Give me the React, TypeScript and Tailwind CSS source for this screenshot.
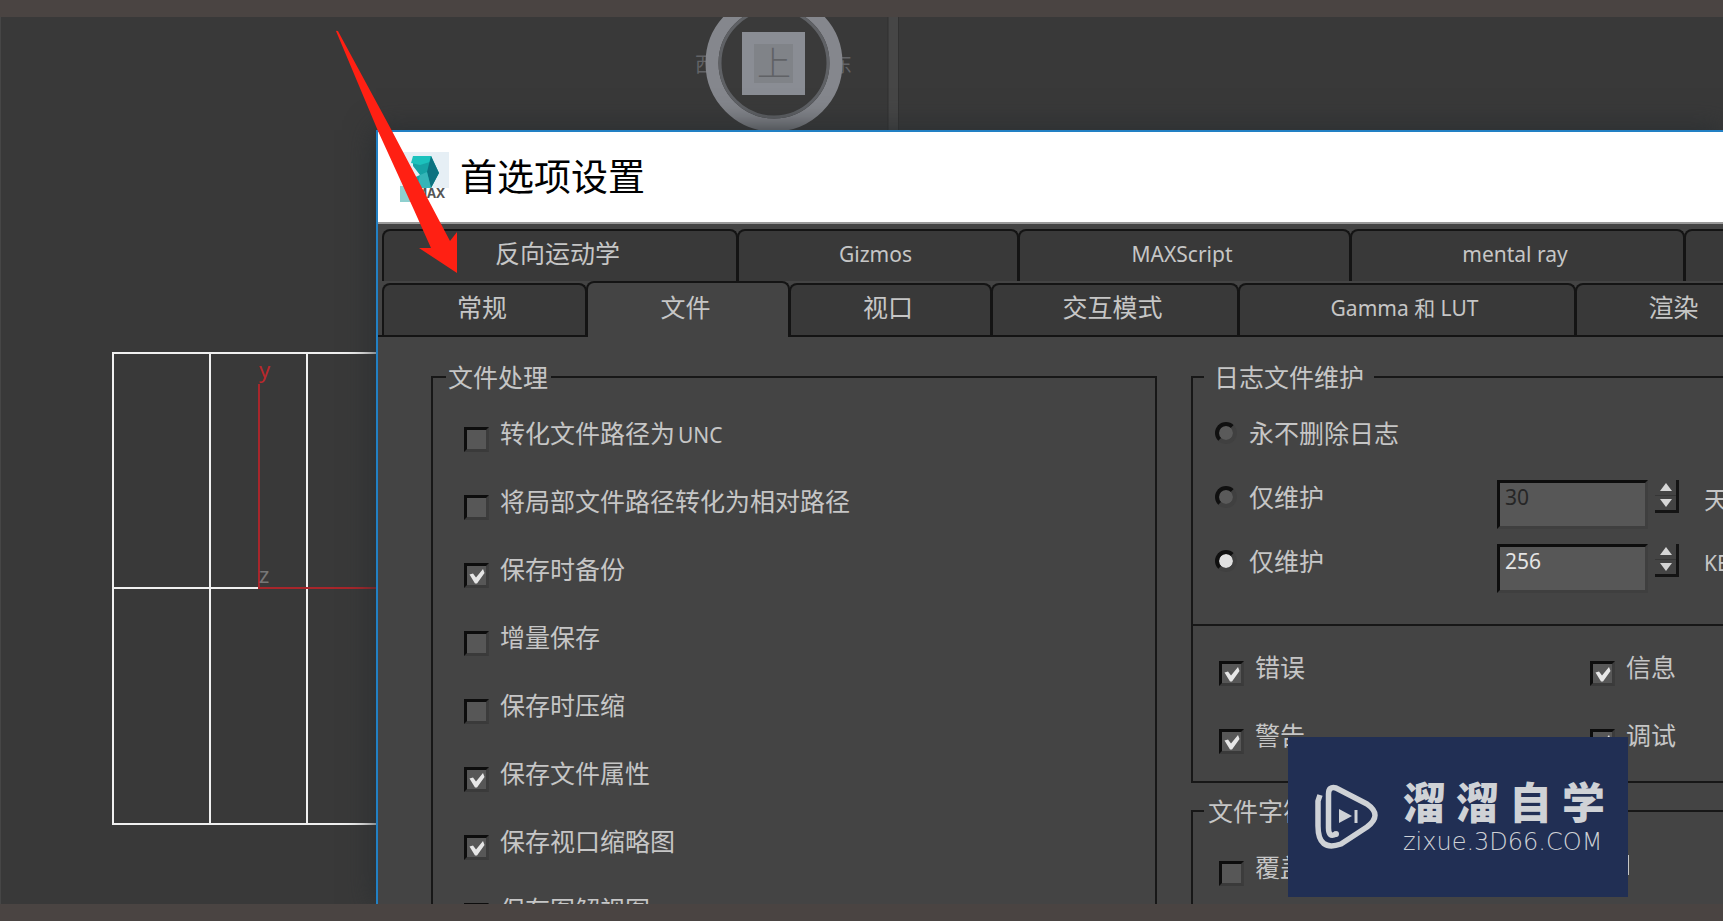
import React from "react";
import clsx from "clsx";

const FILE_OPTIONS = [
  { label: "转化文件路径为", suffix: "UNC", checked: false },
  { label: "将局部文件路径转化为相对路径", checked: false },
  { label: "保存时备份", checked: true },
  { label: "增量保存", checked: false },
  { label: "保存时压缩", checked: false },
  { label: "保存文件属性", checked: true },
  { label: "保存视口缩略图", checked: true },
  { label: "保存图解视图", checked: true },
];

const LOG_OPTIONS = [
  { label: "错误", checked: true },
  { label: "信息", checked: true },
  { label: "警告", checked: true },
  { label: "调试", checked: true },
];

const LOG_RULES = [
  { label: "永不删除日志" },
  { label: "仅维护", value: "30", unit: "天", disabled: true },
  { label: "仅维护", value: "256", unit: "KB", active: true },
];

const TABS_BACK = [
  { label: "反向运动学", width: "w-[356px]", cjk: true },
  { label: "Gizmos", width: "w-[282px]" },
  { label: "MAXScript", width: "w-[333px]" },
  { label: "mental ray", width: "w-[335px]" },
  { label: "", width: "w-[240px]" },
];

const TABS_FRONT = [
  { label: "常规", width: "w-[205px]", cjk: true },
  { label: "文件", width: "w-[204px]", cjk: true, selected: true },
  { label: "视口", width: "w-[203px]", cjk: true },
  { label: "交互模式", width: "w-[248px]", cjk: true },
  { label: "Gamma 和 LUT", width: "w-[338px]" },
  { label: "渲染", width: "w-[202px]", cjk: true },
];

type TabProps = { label: string; width: string; cjk?: boolean; selected?: boolean };

const Tab = ({ label, width, cjk, selected }: TabProps) => (
  <button
    type="button"
    role="tab"
    aria-selected={!!selected}
    className={clsx(
      "-mr-px shrink-0 rounded-t-lg border-2 border-b-0 border-[#141414] pr-[5px] text-[#c6c6c6]",
      width,
      cjk ? "pb-[4px] text-[25px]" : "pb-[2px] text-[21px]",
      selected ? "relative -mb-[2px] h-[56px] bg-[#444444]" : "h-[52px] bg-[#393939]"
    )}
  >
    {label}
  </button>
);

type CheckProps = { label: string; suffix?: string; checked?: boolean };

const Check = ({ label, suffix, checked }: CheckProps) => (
  <label className="flex h-[31px] items-start gap-[11px] whitespace-nowrap">
    <span className="mt-[6px] grid shrink-0">
      <input
        type="checkbox"
        defaultChecked={checked}
        className="peer col-start-1 row-start-1 size-[25px] appearance-none border-[3px] border-t-[#0d0d0d] border-r-[#3c3c3c] border-b-[#3a3a3a] border-l-[#0d0d0d] bg-[#575757]"
      />
      <svg viewBox="0 0 25 25" className="pointer-events-none invisible col-start-1 row-start-1 size-[25px] peer-checked:visible">
        <path d="M5.500 11.500 L9 10.500 L12 14.500 L19 6 L20.500 10 L13 20.500 L11 20.500 Z" fill="#e6e6e6" />
      </svg>
    </span>
    <span className="text-[25px] leading-[25px]">
      {label}
      {suffix && <span className="ml-[3px] text-[21px]">{suffix}</span>}
    </span>
  </label>
);

const Spinner = () => (
  <span className="ml-[7px] flex h-[33px] w-6 shrink-0 flex-col border-r-[3px] border-b-[3px] border-[#141414]">
    <button type="button" aria-label="增加" className="flex flex-1 items-center justify-center">
      <svg viewBox="0 0 12 8" className="h-2 w-3"><path d="M6 0 L12 8 H0 Z" fill="#d6d6d6" /></svg>
    </button>
    <button type="button" aria-label="减少" className="flex flex-1 items-center justify-center border-t border-[#363636]">
      <svg viewBox="0 0 12 8" className="h-2 w-3"><path d="M0 0 H12 L6 8 Z" fill="#d6d6d6" /></svg>
    </button>
  </span>
);

const LogRule = ({ label, value, unit, disabled, active }: (typeof LOG_RULES)[number]) => (
  <div className="flex h-[49px] items-start whitespace-nowrap">
    <label className="flex w-[282px] shrink-0 items-center gap-3 text-[25px] leading-[34px]">
      <input
        type="radio"
        name="log-rule"
        defaultChecked={active}
        className="size-[22px] shrink-0 appearance-none rounded-full border-[4px] border-t-[#101010] border-r-[#404040] border-b-[#404040] border-l-[#101010] bg-[#5a5a5a] bg-clip-padding checked:bg-[#e0e0e0]"
      />
      {label}
    </label>
    {value && (
      <>
        <input
          type="text"
          aria-label={label + unit}
          defaultValue={value}
          className={clsx(
            "h-[49px] w-[151px] shrink-0 border-[3px] border-t-[#0d0d0d] border-r-[#3f3f3f] border-b-[#3f3f3f] border-l-[#0d0d0d] bg-[#575757] pb-[15px] pl-[5px] text-[21px]",
            disabled ? "text-[#262626]" : "text-[#e4e4e4]"
          )}
        />
        <Spinner />
        <span className={clsx("ml-[25px] shrink-0 leading-[38px]", disabled ? "text-[25px]" : "text-[21px]")}>{unit}</span>
      </>
    )}
  </div>
);

const Viewport = () => (
  <svg className="absolute inset-0 h-full w-full" aria-hidden="true">
    {/* viewport divider */}
    <rect x="888" y="0" width="10" height="887" fill="#464646" />
    <path d="M888 0 V887 M898.500 0 V887" stroke="#313131" />
    <path d="M0.500 0 V887" stroke="#464646" />

    {/* view cube */}
    <g fontFamily="Noto Sans CJK SC" fill="#626366">
      <text x="695" y="55" fontSize="20">西</text>
      <text x="832" y="55" fontSize="20">东</text>
    </g>
    <circle cx="774" cy="46" r="62" fill="#3a3a3a" stroke="#85878d" strokeWidth="13" />
    <circle cx="774" cy="46" r="54" fill="none" stroke="#5f6165" strokeWidth="3" />
    <rect x="742" y="15" width="63" height="63" fill="#8a8d94" />
    <rect x="754" y="27" width="39" height="39" fill="#808388" />
    <text x="757" y="59" fontSize="34" fontFamily="Noto Sans CJK SC" fontWeight="300" fill="#606266">上</text>

    {/* wireframe */}
    <g stroke="#f0f0f0" strokeWidth="2" fill="none">
      <path d="M113 336 H400 M113 571 H259 M113 807 H400" />
      <path d="M113 335 V808 M210 336 V807 M307 336 V807" />
    </g>
    <path d="M259 367 V571 H400" stroke="#a8262b" strokeWidth="2" fill="none" />
    <g fontFamily="Noto Sans" fontSize="22">
      <text x="259" y="361" fill="#b8282c">y</text>
      <text x="259" y="566" fill="#777777">z</text>
    </g>
  </svg>
);

const AppIcon = () => (
  <svg viewBox="0 0 49 50" className="h-[50px] w-[49px]" aria-hidden="true">
    <rect width="49" height="36" fill="#e6eff5" />
    <rect y="34" width="16" height="16" fill="#8fd0cf" />
    <path d="M13 4 L31 4 L39 21 L31 36 L17 36 L11 27 L20 23 L13 14 Z" fill="#16a3a5" />
    <path d="M13 4 L31 4 L33 9 L20 13 L11 11 Z" fill="#1cc2bd" />
    <path d="M31 4 L39 21 L31 36 L27 20 Z" fill="#0c7280" />
    <path d="M20 23 L27 20 L31 36 L17 36 Z" fill="#35b5b8" />
    <text x="18" y="46" fontFamily="Liberation Mono" fontSize="15" fontWeight="700" fill="#555555">MAX</text>
  </svg>
);

const Watermark = () => (
  <div className="absolute right-[95px] bottom-[7px] flex h-[160px] w-[340px] items-center bg-[#212f54] pl-[26px] text-[#cfd2d6]">
    <svg viewBox="0 0 66 66" className="size-[66px] shrink-0" aria-hidden="true">
      <path d="M22 50 Q14.500 54 14.500 44 V10 Q14.500 2 22 4 L53 20 Q69 31 53 43 L27 60 Q4 68 4 42 V17 L6 11" fill="none" stroke="currentColor" strokeWidth="5.500" strokeLinejoin="round" />
      <circle cx="22" cy="50" r="3" fill="currentColor" />
      <path d="M25 25 L38 32 L25 39 Z" fill="currentColor" />
      <path d="M42 26 V39" stroke="currentColor" strokeWidth="3" />
    </svg>
    <div className="ml-[23px] w-[202px] pt-1">
      <div className="flex justify-between text-[43px] leading-[46px] font-black">
        <span>溜</span>
        <span>溜</span>
        <span>自</span>
        <span>学</span>
      </div>
      <div className="font-['DejaVu_Sans'] text-[24px] leading-[32px] font-extralight whitespace-nowrap">zixue.3D66.COM</div>
    </div>
  </div>
);

export default function App() {
  return (
    <div className="flex h-screen flex-col overflow-hidden bg-[#4a4442] font-['Noto_Sans','Noto_Sans_CJK_SC',sans-serif] text-[#c6c6c6]">
      <div className="h-[17px] shrink-0" />

      <main className="relative flex min-h-0 flex-1 overflow-hidden bg-[#393939] pt-[113px] pl-[376px]">
        <Viewport />

        <section className="relative flex min-w-0 flex-1 flex-col border-t-2 border-l-2 border-[#2280c4] bg-[#444444] shadow-[0_0_28px_#282d30]">
          <header className="flex h-[92px] shrink-0 items-center gap-[11px] border-b-2 border-[#9a9a9a] bg-white pl-[22px]">
            <AppIcon />
            <h1 className="text-[37px] leading-[40px] text-black">首选项设置</h1>
          </header>

          <div role="tablist" className="shrink-0 overflow-hidden pt-[5px]">
            <div className="flex pl-1">
              {TABS_BACK.map((tab, idx) => (
                <Tab key={idx} {...tab} />
              ))}
            </div>
            <div className="flex items-end border-b-2 border-[#141414] pl-1">
              {TABS_FRONT.map((tab, idx) => (
                <Tab key={idx} {...tab} />
              ))}
            </div>
          </div>

          <div className="flex min-h-0 flex-1 gap-[34px] overflow-hidden pt-[25px] pl-[53px]">
            <fieldset className="h-[600px] w-[726px] shrink-0 border-2 border-[#171717] pl-[13px]">
              <legend className="pr-[3px] pl-[2px] text-[25px] leading-[30px]">文件处理</legend>
              <div className="flex flex-col gap-[37px] pt-[29px] pl-[18px]">
                {FILE_OPTIONS.map((opt) => (
                  <Check key={opt.label} {...opt} />
                ))}
              </div>
            </fieldset>

            <div className="min-w-0 flex-1">
              <fieldset className="min-w-0 border-2 border-r-0 border-[#171717] pl-[11px]">
                <legend className="px-[10px] text-[25px] leading-[30px]">日志文件维护</legend>
                <div className="flex flex-col gap-[15px] pt-[24px] pl-[11px]">
                  {LOG_RULES.map((rule, idx) => (
                    <LogRule key={idx} {...rule} />
                  ))}
                </div>
                <hr className="mt-[31px] -ml-[11px] border-t-2 border-[#171717]" />
                <div className="grid grid-cols-[371px_1fr] gap-y-[37px] pt-[29px] pb-[27px] pl-[15px]">
                  {LOG_OPTIONS.map((opt) => (
                    <Check key={opt.label} {...opt} />
                  ))}
                </div>
              </fieldset>

              <fieldset className="mt-[13px] h-[200px] min-w-0 border-2 border-r-0 border-[#171717] pl-[11px]">
                <legend className="pr-1 pl-[4px] text-[25px] leading-[30px]">文件字符</legend>
                <div className="flex pt-[29px] pl-[15px]">
                  <Check label="覆盖" />
                  <span className="ml-[322px] h-5 w-[2px] bg-[#c6c6c6]" />
                </div>
              </fieldset>
            </div>
          </div>
        </section>

        {/* pointer to the tab strip */}
        <svg className="pointer-events-none absolute top-0 left-[330px] h-[260px] w-[140px]" viewBox="0 0 140 260" aria-hidden="true">
          <path d="M6 14 Q8 13 9 16 L62 114 L120 224 L127 215 V256 L89 231 L101 231 L84 193 L48 114 Z" fill="#ff2013" />
        </svg>

        <Watermark />
      </main>

      <div className="h-[17px] shrink-0" />
    </div>
  );
}
